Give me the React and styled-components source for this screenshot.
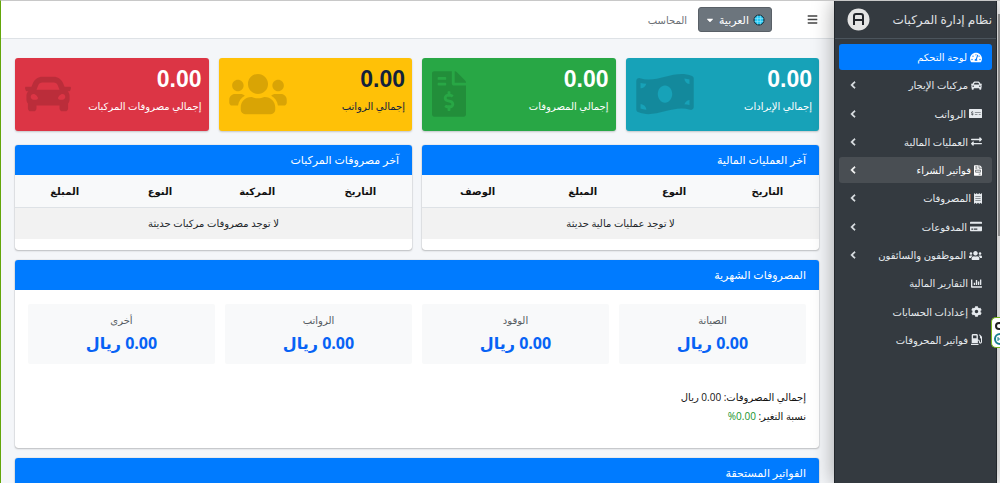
import React from 'react';
import styled, { createGlobalStyle, css } from 'styled-components';
import {
  FaTachometerAlt, FaCar, FaMoneyCheckAlt, FaExchangeAlt, FaFileInvoice, FaReceipt,
  FaCreditCard, FaUsers, FaChartBar, FaCog, FaGasPump, FaFileInvoiceDollar, FaBars,
  FaChevronLeft, FaCaretDown, FaMoneyBillWave,
} from 'react-icons/fa';

const GlobalStyle = createGlobalStyle`
  *, *::before, *::after { box-sizing: border-box; }
  html, body { margin: 0; height: 100%; overflow: hidden; }
  #root { height: 100%; }
  body {
    background: #f4f6f9;
    color: #212529;
    font-family: "Open Sans", "DejaVu Sans", sans-serif;
    font-size: 10px;
    line-height: 18px;
  }
`;

const Shell = styled.div`
  direction: rtl;
  display: flex;
  height: 100vh;
  overflow: hidden;
  border-left: 1px solid #63a60a;
  border-top: 1px solid #c8c8c8;
`;

const ScrollTrack = styled.div`
  flex: none;
  width: 3px;
  background: #fcfcfc;
`;

const ScrollThumb = styled.div`
  width: 2px;
  height: 222px;
  margin-top: 13px;
  background: #a4a4a4;
`;

const Sidebar = styled.aside`
  flex: none;
  width: 163px;
  background: #343a40;
  border-left: 1px solid #22272c;
  border-right: 1px solid #22272c;
  box-shadow: 0 0 20px rgba(0, 0, 0, 0.35);
  z-index: 2;
`;

const Brand = styled.a`
  display: flex;
  align-items: center;
  justify-content: space-between;
  height: 38px;
  padding: 0 4px 0 12px;
  border-bottom: 1px solid #4b545c;
  color: #e0e3e6;
  font-size: 12px;
  text-decoration: none;
  white-space: nowrap;
`;

const Menu = styled.nav`
  display: flex;
  flex-direction: column;
  justify-content: space-between;
  height: 318px;
  padding: 5px 4px 4px;
`;

const MenuLink = styled.a`
  display: flex;
  align-items: center;
  gap: 3px;
  height: 26px;
  padding: 0 10px;
  border-radius: 3px;
  color: #e6eaee;
  text-decoration: none;
  white-space: nowrap;
  ${({ $state }) => $state === 'active' && css`
    background: #007bff;
    color: #fff;
  `}
  ${({ $state }) => $state === 'hover' && css`
    background: #494e53;
    color: #fff;
  `}
`;

const MenuIcon = styled.span`
  display: flex;
  flex: none;
  svg {
    width: ${({ $width }) => $width}px;
    height: 11px;
  }
`;

const MenuArrow = styled(FaChevronLeft)`
  flex: none;
  stroke: currentColor;
  stroke-width: 40px;
`;

const MenuText = styled.span`
  flex: 1;
`;

const Main = styled.main`
  flex: 1;
  min-width: 0;
`;

const Navbar = styled.header`
  display: flex;
  align-items: center;
  height: 38px;
  padding: 0 16px;
  background: #fff;
  border-bottom: 1px solid #dee2e6;
`;

const IconButton = styled.button`
  display: flex;
  margin-left: 35px;
  padding: 0;
  border: 0;
  background: none;
  color: #444;
`;

const LanguageButton = styled.button`
  display: flex;
  align-items: center;
  justify-content: center;
  gap: 4px;
  width: 74px;
  height: 25px;
  padding: 0;
  border: 1px solid #596067;
  border-radius: 3px;
  background: #6c757d;
  color: #fff;
  font: inherit;
  font-size: 11px;
`;

const UserLink = styled.a`
  margin-right: 11px;
  color: #6c7075;
  text-decoration: none;
`;

const Content = styled.div`
  display: flex;
  flex-direction: column;
  gap: 10px;
  padding: 19px 15px 0 14px;
`;

const StatRow = styled.div`
  display: grid;
  grid-template-columns: repeat(4, 1fr);
  gap: 10px;
  margin-bottom: 4px;
`;

const StatCard = styled.section`
  display: flex;
  flex-direction: row-reverse;
  align-items: center;
  justify-content: space-between;
  height: 73px;
  padding: 0 7px 2px 10px;
  border-radius: 3px;
  background: ${({ $bg }) => $bg};
  box-shadow: 0 1px 2px rgba(0, 0, 0, 0.2);
  color: ${({ $fg }) => $fg};
  > svg {
    flex: none;
    width: ${({ $iconWidth }) => $iconWidth}px;
    height: 46px;
    color: rgba(0, 0, 0, 0.15);
  }
`;

const StatBody = styled.div`
  align-self: flex-start;
  padding-top: 5px;
  white-space: nowrap;
`;

const StatValue = styled.div`
  height: 32px;
  font: bold 23px/32px "Liberation Sans", sans-serif;
`;

const StatLabel = styled.div`
  margin-top: 2px;
`;

const CardRow = styled.div`
  display: grid;
  grid-template-columns: 1fr 1fr;
  gap: 10px;
`;

const Card = styled.section`
  height: ${({ $height }) => $height};
  border-radius: 3px;
  background: #fff;
  box-shadow: 0 0 1px rgba(0, 0, 0, 0.4), 0 1px 2px rgba(0, 0, 0, 0.2);
  overflow: hidden;
`;

const CardTitle = styled.h3`
  height: 30px;
  margin: 0;
  padding: 0 13px;
  background: #007bff;
  color: #fff;
  font-size: 11px;
  font-weight: 400;
  line-height: 30px;
`;

const Table = styled.table`
  width: 100%;
  border-collapse: collapse;
  table-layout: fixed;
  text-align: center;
  th {
    height: 32px;
    padding: 0;
    border-bottom: 1px solid #dee2e6;
    background: #f8f9fa;
    color: #111;
    font-weight: 700;
  }
  td {
    height: 32px;
    padding: 0;
    background: #f2f2f2;
  }
`;

const Column = styled.col`
  width: ${({ $width }) => $width};
`;

const CardBody = styled.div`
  padding: 14px 13px;
`;

const ExpenseGrid = styled.div`
  display: grid;
  grid-template-columns: repeat(4, 1fr);
  gap: 10px;
  margin-bottom: 24px;
`;

const Expense = styled.div`
  height: 60px;
  padding-top: 7px;
  border-radius: 2px;
  background: #f8f9fa;
  text-align: center;
`;

const ExpenseName = styled.div`
  color: #555b61;
`;

const ExpenseValue = styled.div`
  color: #0762f5;
  font-size: 16px;
  font-weight: 700;
  line-height: 28px;
`;

const Summary = styled.p`
  margin: 0;
  color: #111;
  line-height: 19px;
`;

const Change = styled.span`
  color: #15932c;
`;

const Badge = styled.aside`
  position: absolute;
  top: 317px;
  right: 0;
  z-index: 3;
  width: 9px;
  height: 31px;
  border: 1px solid #76b51b;
  border-right: 0;
  border-radius: 5px 0 0 5px;
  background: #fff;
  overflow: hidden;
`;

const menu = [
  { text: 'لوحة التحكم', Icon: FaTachometerAlt, width: 12, state: 'active' },
  { text: 'مركبات الإيجار', Icon: FaCar, width: 11, children: true },
  { text: 'الرواتب', Icon: FaMoneyCheckAlt, width: 13, children: true },
  { text: 'العمليات المالية', Icon: FaExchangeAlt, width: 11, children: true },
  { text: 'فواتير الشراء', Icon: FaFileInvoice, width: 8, children: true, state: 'hover' },
  { text: 'المصروفات', Icon: FaReceipt, width: 8, children: true },
  { text: 'المدفوعات', Icon: FaCreditCard, width: 12, children: true },
  { text: 'الموظفون والسائقون', Icon: FaUsers, width: 13, children: true },
  { text: 'التقارير المالية', Icon: FaChartBar, width: 11 },
  { text: 'إعدادات الحسابات', Icon: FaCog, width: 11 },
  { text: 'فواتير المحروقات', Icon: FaGasPump, width: 11 },
];

const stats = [
  { label: 'إجمالي الإيرادات', bg: '#17a2b8', fg: '#fff', Icon: FaMoneyBillWave, width: 58 },
  { label: 'إجمالي المصروفات', bg: '#28a745', fg: '#fff', Icon: FaFileInvoiceDollar, width: 34 },
  { label: 'إجمالي الرواتب', bg: '#ffc107', fg: '#12213c', Icon: FaUsers, width: 58 },
  { label: 'إجمالي مصروفات المركبات', bg: '#dc3545', fg: '#fff', Icon: FaCar, width: 46 },
];

const tables = [
  {
    title: 'آخر العمليات المالية',
    columns: [['التاريخ', '26%'], ['النوع', '21%'], ['المبلغ', '25%'], ['الوصف', '28%']],
    empty: 'لا توجد عمليات مالية حديثة',
  },
  {
    title: 'آخر مصروفات المركبات',
    columns: [['التاريخ', '26%'], ['المركبة', '26%'], ['النوع', '23%'], ['المبلغ', '25%']],
    empty: 'لا توجد مصروفات مركبات حديثة',
  },
];

const expenses = ['الصيانة', 'الوقود', 'الرواتب', 'أخرى'];

function BrandLogo() {
  return (
    <svg width="23" height="23" viewBox="0 0 23 23" aria-hidden="true">
      <circle cx="11.5" cy="11.5" r="11" fill="#e4e4e4" />
      <path d="M7 17V8q0-2 2-2h5q2 0 2 2v9M7 12h9" fill="none" stroke="#22252a" strokeWidth="2" />
    </svg>
  );
}

function Globe() {
  return (
    <svg width="12" height="12" viewBox="0 0 12 12" aria-hidden="true">
      <circle cx="6" cy="6" r="5" fill="#28c8f4" stroke="#10232e" />
      <path d="M1.5 4.5h9M1.5 7.5h9M4.5 1.5v9M7.5 1.5v9" stroke="#8de6fb" strokeWidth="0.6" />
    </svg>
  );
}

export default function App() {
  return (
    <>
      <GlobalStyle />
      <Shell lang="ar">
        <ScrollTrack><ScrollThumb /></ScrollTrack>
        <Sidebar>
          <Brand href="#">نظام إدارة المركبات<BrandLogo /></Brand>
          <Menu>
            {menu.map(({ text, Icon, width, state, children }) => (
              <MenuLink key={text} href="#" $state={state}>
                <MenuIcon $width={width}><Icon /></MenuIcon>
                <MenuText>{text}</MenuText>
                {children && <MenuArrow size={8} />}
              </MenuLink>
            ))}
          </Menu>
        </Sidebar>
        <Main>
          <Navbar>
            <IconButton aria-label="القائمة"><FaBars size={11} /></IconButton>
            <LanguageButton><Globe />العربية<FaCaretDown size={10} /></LanguageButton>
            <UserLink href="#">المحاسب</UserLink>
          </Navbar>
          <Content>
            <StatRow>
              {stats.map(({ label, bg, fg, Icon, width }) => (
                <StatCard key={label} $bg={bg} $fg={fg} $iconWidth={width}>
                  <Icon />
                  <StatBody>
                    <StatValue>0.00</StatValue>
                    <StatLabel>{label}</StatLabel>
                  </StatBody>
                </StatCard>
              ))}
            </StatRow>
            <CardRow>
              {tables.map(({ title, columns, empty }) => (
                <Card key={title} $height="105px">
                  <CardTitle>{title}</CardTitle>
                  <Table>
                    <colgroup>
                      {columns.map(([name, width]) => <Column key={name} $width={width} />)}
                    </colgroup>
                    <thead>
                      <tr>{columns.map(([name]) => <th key={name} scope="col">{name}</th>)}</tr>
                    </thead>
                    <tbody><tr><td colSpan={4}>{empty}</td></tr></tbody>
                  </Table>
                </Card>
              ))}
            </CardRow>
            <Card $height="188px">
              <CardTitle>المصروفات الشهرية</CardTitle>
              <CardBody>
                <ExpenseGrid>
                  {expenses.map((name) => (
                    <Expense key={name}>
                      <ExpenseName>{name}</ExpenseName>
                      <ExpenseValue>0.00 ريال</ExpenseValue>
                    </Expense>
                  ))}
                </ExpenseGrid>
                <Summary>إجمالي المصروفات: 0.00 ريال</Summary>
                <Summary>نسبة التغير: <Change>0.00%</Change></Summary>
              </CardBody>
            </Card>
            <Card $height="105px">
              <CardTitle>الفواتير المستحقة</CardTitle>
            </Card>
          </Content>
        </Main>
        <Badge aria-hidden="true">
          <svg width="8" height="29" viewBox="0 0 8 29">
            <circle cx="7" cy="8" r="3" fill="none" stroke="#222" strokeWidth="2" />
            <circle cx="8" cy="21" r="5" fill="none" stroke="#17808f" strokeWidth="2" />
            <path d="M6 21h2M6 19v4" stroke="#17808f" />
          </svg>
        </Badge>
      </Shell>
    </>
  );
}
